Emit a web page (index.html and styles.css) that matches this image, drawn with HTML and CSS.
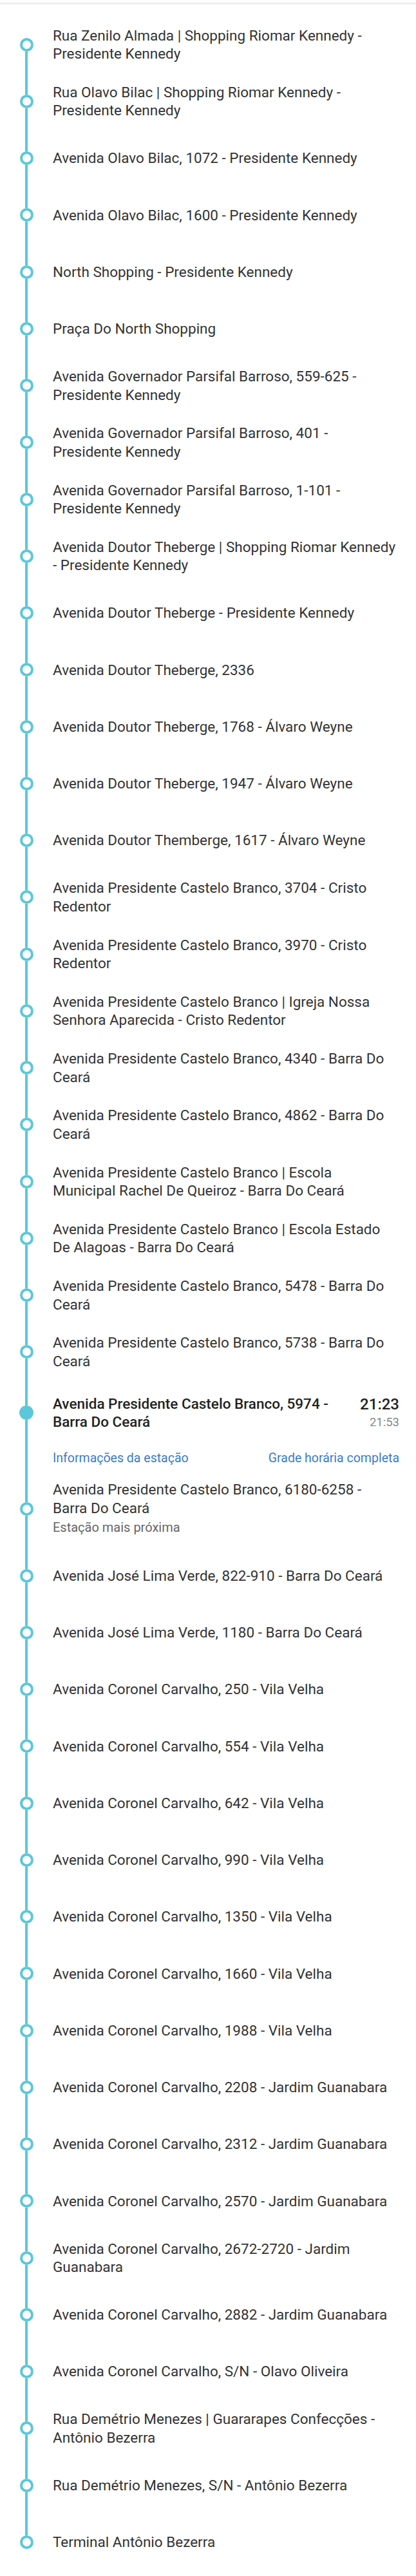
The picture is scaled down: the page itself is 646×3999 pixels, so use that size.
FILE: index.html
```html
<!DOCTYPE html>
<html lang="pt-BR">
<head>
<meta charset="utf-8">
<title>Paradas</title>
<link rel="stylesheet" href="styles.css">
</head>
<body>
<div class="topbar"></div>
<ol class="stops">
  <li class="stop first"><div class="rail"><span class="seg"></span><span class="dot"></span><span class="seg"></span></div><div class="name">Rua Zenilo Almada | Shopping Riomar Kennedy - Presidente Kennedy</div></li>
  <li class="stop"><div class="rail"><span class="seg"></span><span class="dot"></span><span class="seg"></span></div><div class="name">Rua Olavo Bilac | Shopping Riomar Kennedy - Presidente Kennedy</div></li>
  <li class="stop"><div class="rail"><span class="seg"></span><span class="dot"></span><span class="seg"></span></div><div class="name">Avenida Olavo Bilac, 1072 - Presidente Kennedy</div></li>
  <li class="stop"><div class="rail"><span class="seg"></span><span class="dot"></span><span class="seg"></span></div><div class="name">Avenida Olavo Bilac, 1600 - Presidente Kennedy</div></li>
  <li class="stop"><div class="rail"><span class="seg"></span><span class="dot"></span><span class="seg"></span></div><div class="name">North Shopping - Presidente Kennedy</div></li>
  <li class="stop"><div class="rail"><span class="seg"></span><span class="dot"></span><span class="seg"></span></div><div class="name">Praça Do North Shopping</div></li>
  <li class="stop"><div class="rail"><span class="seg"></span><span class="dot"></span><span class="seg"></span></div><div class="name">Avenida Governador Parsifal Barroso, 559-625 - Presidente Kennedy</div></li>
  <li class="stop"><div class="rail"><span class="seg"></span><span class="dot"></span><span class="seg"></span></div><div class="name">Avenida Governador Parsifal Barroso, 401 - Presidente Kennedy</div></li>
  <li class="stop"><div class="rail"><span class="seg"></span><span class="dot"></span><span class="seg"></span></div><div class="name">Avenida Governador Parsifal Barroso, 1-101 - Presidente Kennedy</div></li>
  <li class="stop"><div class="rail"><span class="seg"></span><span class="dot"></span><span class="seg"></span></div><div class="name">Avenida Doutor Theberge | Shopping Riomar Kennedy - Presidente Kennedy</div></li>
  <li class="stop"><div class="rail"><span class="seg"></span><span class="dot"></span><span class="seg"></span></div><div class="name">Avenida Doutor Theberge - Presidente Kennedy</div></li>
  <li class="stop"><div class="rail"><span class="seg"></span><span class="dot"></span><span class="seg"></span></div><div class="name">Avenida Doutor Theberge, 2336</div></li>
  <li class="stop"><div class="rail"><span class="seg"></span><span class="dot"></span><span class="seg"></span></div><div class="name">Avenida Doutor Theberge, 1768 - Álvaro Weyne</div></li>
  <li class="stop"><div class="rail"><span class="seg"></span><span class="dot"></span><span class="seg"></span></div><div class="name">Avenida Doutor Theberge, 1947 - Álvaro Weyne</div></li>
  <li class="stop"><div class="rail"><span class="seg"></span><span class="dot"></span><span class="seg"></span></div><div class="name">Avenida Doutor Themberge, 1617 - Álvaro Weyne</div></li>
  <li class="stop"><div class="rail"><span class="seg"></span><span class="dot"></span><span class="seg"></span></div><div class="name">Avenida Presidente Castelo Branco, 3704 - Cristo Redentor</div></li>
  <li class="stop"><div class="rail"><span class="seg"></span><span class="dot"></span><span class="seg"></span></div><div class="name">Avenida Presidente Castelo Branco, 3970 - Cristo Redentor</div></li>
  <li class="stop"><div class="rail"><span class="seg"></span><span class="dot"></span><span class="seg"></span></div><div class="name">Avenida Presidente Castelo Branco | Igreja Nossa Senhora Aparecida - Cristo Redentor</div></li>
  <li class="stop"><div class="rail"><span class="seg"></span><span class="dot"></span><span class="seg"></span></div><div class="name">Avenida Presidente Castelo Branco, 4340 - Barra Do Ceará</div></li>
  <li class="stop"><div class="rail"><span class="seg"></span><span class="dot"></span><span class="seg"></span></div><div class="name">Avenida Presidente Castelo Branco, 4862 - Barra Do Ceará</div></li>
  <li class="stop"><div class="rail"><span class="seg"></span><span class="dot"></span><span class="seg"></span></div><div class="name">Avenida Presidente Castelo Branco | Escola Municipal Rachel De Queiroz - Barra Do Ceará</div></li>
  <li class="stop"><div class="rail"><span class="seg"></span><span class="dot"></span><span class="seg"></span></div><div class="name">Avenida Presidente Castelo Branco | Escola Estado De Alagoas - Barra Do Ceará</div></li>
  <li class="stop"><div class="rail"><span class="seg"></span><span class="dot"></span><span class="seg"></span></div><div class="name">Avenida Presidente Castelo Branco, 5478 - Barra Do Ceará</div></li>
  <li class="stop"><div class="rail"><span class="seg"></span><span class="dot"></span><span class="seg"></span></div><div class="name">Avenida Presidente Castelo Branco, 5738 - Barra Do Ceará</div></li>
  <li class="stop-current">
    <div class="current-head">
      <div class="rail"><span class="seg"></span><span class="dot filled"></span><span class="seg"></span></div>
      <div class="name strong">Avenida Presidente Castelo Branco, 5974 - Barra Do Ceará</div>
      <div class="times"><div class="time-main">21:23</div><div class="time-next">21:53</div></div>
    </div>
    <div class="current-links">
      <div class="rail"><span class="seg"></span></div>
      <div class="links"><span class="link">Informações da estação</span><span class="link">Grade horária completa</span></div>
    </div>
  </li>
  <li class="stop nearest"><div class="rail"><span class="seg"></span><span class="dot"></span><span class="seg"></span></div><div class="name">Avenida Presidente Castelo Branco, 6180-6258 - Barra Do Ceará<div class="sub">Estação mais próxima</div></div></li>
  <li class="stop"><div class="rail"><span class="seg"></span><span class="dot"></span><span class="seg"></span></div><div class="name">Avenida José Lima Verde, 822-910 - Barra Do Ceará</div></li>
  <li class="stop"><div class="rail"><span class="seg"></span><span class="dot"></span><span class="seg"></span></div><div class="name">Avenida José Lima Verde, 1180 - Barra Do Ceará</div></li>
  <li class="stop"><div class="rail"><span class="seg"></span><span class="dot"></span><span class="seg"></span></div><div class="name">Avenida Coronel Carvalho, 250 - Vila Velha</div></li>
  <li class="stop"><div class="rail"><span class="seg"></span><span class="dot"></span><span class="seg"></span></div><div class="name">Avenida Coronel Carvalho, 554 - Vila Velha</div></li>
  <li class="stop"><div class="rail"><span class="seg"></span><span class="dot"></span><span class="seg"></span></div><div class="name">Avenida Coronel Carvalho, 642 - Vila Velha</div></li>
  <li class="stop"><div class="rail"><span class="seg"></span><span class="dot"></span><span class="seg"></span></div><div class="name">Avenida Coronel Carvalho, 990 - Vila Velha</div></li>
  <li class="stop"><div class="rail"><span class="seg"></span><span class="dot"></span><span class="seg"></span></div><div class="name">Avenida Coronel Carvalho, 1350 - Vila Velha</div></li>
  <li class="stop"><div class="rail"><span class="seg"></span><span class="dot"></span><span class="seg"></span></div><div class="name">Avenida Coronel Carvalho, 1660 - Vila Velha</div></li>
  <li class="stop"><div class="rail"><span class="seg"></span><span class="dot"></span><span class="seg"></span></div><div class="name">Avenida Coronel Carvalho, 1988 - Vila Velha</div></li>
  <li class="stop"><div class="rail"><span class="seg"></span><span class="dot"></span><span class="seg"></span></div><div class="name">Avenida Coronel Carvalho, 2208 - Jardim Guanabara</div></li>
  <li class="stop"><div class="rail"><span class="seg"></span><span class="dot"></span><span class="seg"></span></div><div class="name">Avenida Coronel Carvalho, 2312 - Jardim Guanabara</div></li>
  <li class="stop"><div class="rail"><span class="seg"></span><span class="dot"></span><span class="seg"></span></div><div class="name">Avenida Coronel Carvalho, 2570 - Jardim Guanabara</div></li>
  <li class="stop"><div class="rail"><span class="seg"></span><span class="dot"></span><span class="seg"></span></div><div class="name">Avenida Coronel Carvalho, 2672-2720 - Jardim Guanabara</div></li>
  <li class="stop"><div class="rail"><span class="seg"></span><span class="dot"></span><span class="seg"></span></div><div class="name">Avenida Coronel Carvalho, 2882 - Jardim Guanabara</div></li>
  <li class="stop"><div class="rail"><span class="seg"></span><span class="dot"></span><span class="seg"></span></div><div class="name">Avenida Coronel Carvalho, S/N - Olavo Oliveira</div></li>
  <li class="stop"><div class="rail"><span class="seg"></span><span class="dot"></span><span class="seg"></span></div><div class="name">Rua Demétrio Menezes | Guararapes Confecções - Antônio Bezerra</div></li>
  <li class="stop"><div class="rail"><span class="seg"></span><span class="dot"></span><span class="seg"></span></div><div class="name">Rua Demétrio Menezes, S/N - Antônio Bezerra</div></li>
  <li class="stop last"><div class="rail"><span class="seg"></span><span class="dot"></span><span class="seg"></span></div><div class="name">Terminal Antônio Bezerra</div></li>
</ol>
</body>
</html>
```

FILE: styles.css
```css
html, body {
  margin: 0;
  padding: 0;
  background: #ffffff;
}

body {
  font-family: "Roboto", "Noto Sans", "Liberation Sans", sans-serif;
  color: #333333;
}

.topbar {
  height: 4px;
  border-bottom: 3px solid #eeeeee;
}

.stops {
  list-style: none;
  margin: 0;
  padding: 18px 0 9px 0;
}

.stop,
.current-head,
.current-links {
  display: flex;
}

.stop {
  min-height: 88.25px;
  padding-right: 31px;
}

.current-head,
.current-links {
  padding-right: 26px;
}

.rail {
  flex: none;
  width: 82px;
  display: flex;
  flex-direction: column;
  align-items: center;
}

.seg {
  flex: 1;
  width: 4px;
  background: #5bc7da;
}

.first .rail .seg:first-child,
.last .rail .seg:last-child {
  background: transparent;
}

.dot {
  flex: none;
  box-sizing: border-box;
  width: 21px;
  height: 21px;
  border: 4px solid #5bc7da;
  border-radius: 50%;
  background: #ffffff;
}

.dot.filled {
  width: 22px;
  height: 22px;
  background: #5bc7da;
}

.name {
  flex: 1;
  align-self: center;
  padding: 15px 0;
  font-size: 22.5px;
  line-height: 28.5px;
  color: #333333;
}

.name.strong {
  font-weight: 500;
  color: #222222;
}

.sub {
  font-size: 20px;
  line-height: 32px;
  color: #666666;
}

.current-head {
  min-height: 100px;
}

.times {
  flex: none;
  align-self: center;
  margin-left: 20px;
  text-align: right;
}

.time-main {
  font-size: 24px;
  line-height: 30px;
  font-weight: 500;
  color: #222222;
}

.time-next {
  font-size: 18.5px;
  line-height: 26px;
  color: #888888;
}

.current-links {
  height: 40px;
}

.links {
  flex: 1;
  display: flex;
  justify-content: space-between;
  align-items: center;
  font-size: 19.5px;
  color: #3b7bc9;
}
```
